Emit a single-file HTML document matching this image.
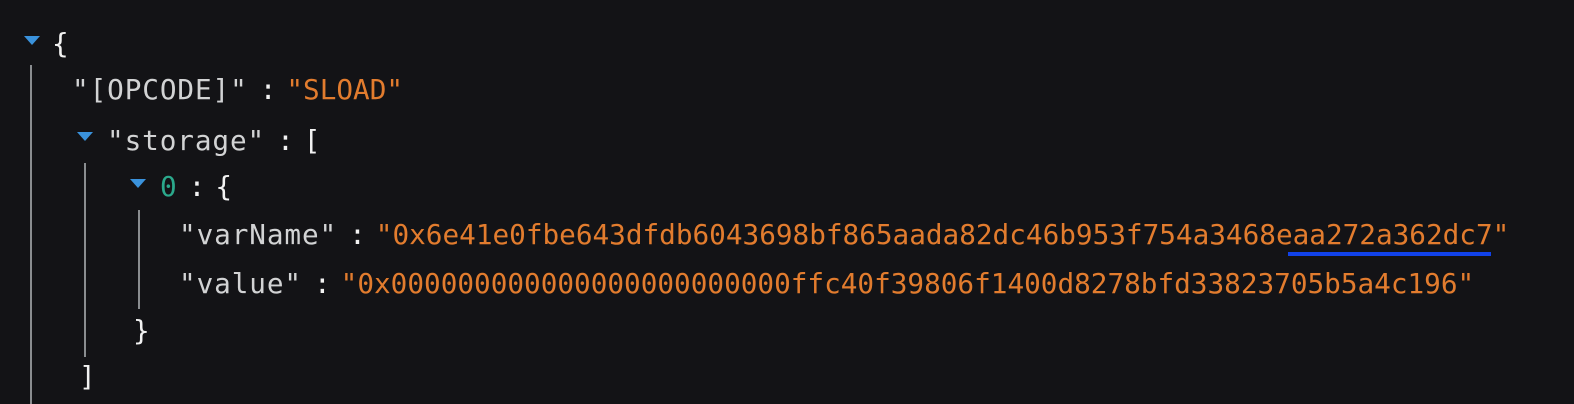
<!DOCTYPE html>
<html><head><style>
html,body{margin:0;padding:0;}
body{width:1574px;height:404px;background:#131316;position:relative;overflow:hidden;font-family:"DejaVu Sans Mono","Liberation Mono",monospace;font-size:27.7px;color:#d2d3d4;}
.r{position:absolute;white-space:pre;line-height:1;}
.k{letter-spacing:0.9px;}
.o{color:#e27c2e;}
.g{color:#2ba98c;}
.w{color:#f2f2f2;}
.c{color:#f2f2f2;margin:0 10px 0 12px;}
.t{position:absolute;width:0;height:0;border-left:8px solid transparent;border-right:8px solid transparent;border-top:9px solid #3a92dc;}
.v{position:absolute;width:2px;background:#8a8d90;}
</style></head><body>
<div class="t" style="left:24px;top:36px"></div>
<div class="r w" style="left:52px;top:30px">{</div>
<div class="v" style="left:30px;top:65px;height:339px"></div>
<div class="r" style="left:72px;top:76px"><span class="k">"[OPCODE]"</span><span class="c">:</span><span class="o">"SLOAD"</span></div>
<div class="t" style="left:77px;top:132px"></div>
<div class="r" style="left:107px;top:127px"><span class="k">"storage"</span><span class="c">:</span><span class="w">[</span></div>
<div class="v" style="left:84px;top:163px;height:194px"></div>
<div class="t" style="left:130px;top:179px"></div>
<div class="r" style="left:160px;top:173px"><span class="g">0</span><span class="c">:</span><span class="w">{</span></div>
<div class="v" style="left:138px;top:210px;height:99px"></div>
<div class="r" style="left:179px;top:221px"><span class="k">"varName"</span><span class="c">:</span><span class="o">"0x6e41e0fbe643dfdb6043698bf865aada82dc46b953f754a3468eaa272a362dc7"</span></div>
<div style="position:absolute;left:1288px;top:252px;width:203px;height:4px;background:#1142ea"></div>
<div class="r" style="left:179px;top:270px"><span class="k">"value"</span><span class="c">:</span><span class="o">"0x000000000000000000000000ffc40f39806f1400d8278bfd33823705b5a4c196"</span></div>
<div class="r w" style="left:133px;top:317px">}</div>
<div class="r w" style="left:79px;top:363px">]</div>
</body></html>
